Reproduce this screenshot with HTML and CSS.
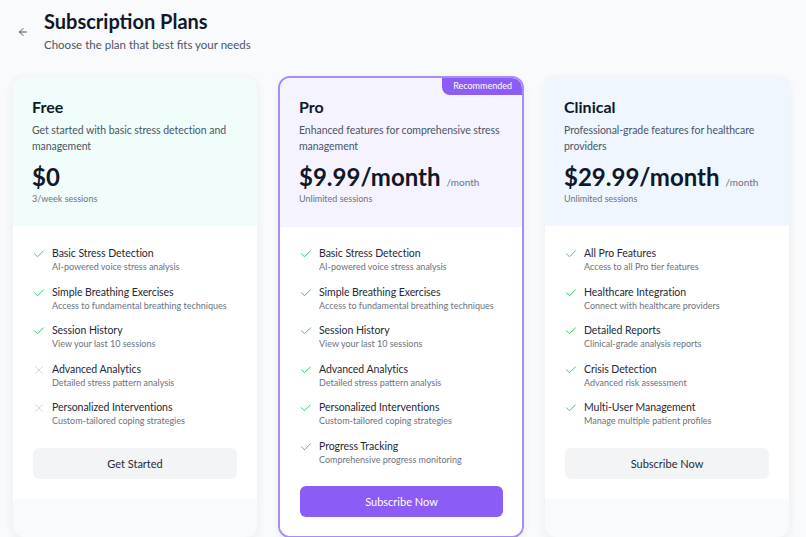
FILE: index.html
```html
<!DOCTYPE html>
<html lang="en">
<head>
    <meta charset="UTF-8">
    <meta name="viewport" content="width=device-width, initial-scale=1.0">
    <title>Subscription Plans</title>
    <link rel="stylesheet" href="styles.css">
</head>
<body>
    <div class="top">
        <button class="back-btn">
            <svg width="12" height="12" viewBox="0 0 24 24" fill="none" stroke="#4b5563" stroke-width="2" stroke-linecap="round" stroke-linejoin="round"><path d="M19 12H5"/><path d="M12 19l-7-7 7-7"/></svg>
        </button>
        <div>
            <h1>Subscription Plans</h1>
            <p class="sub">Choose the plan that best fits your needs</p>
        </div>
    </div>

    <div class="plans">
        <!-- Free -->
        <div class="card">
            <div class="card-head free">
                <h2>Free</h2>
                <p class="desc">Get started with basic stress detection and management</p>
                <div class="price"><span class="amount">$0</span></div>
                <p class="sessions">3/week sessions</p>
            </div>
            <div class="card-body">
                <ul class="features">
                    <li><span class="ic yes"></span><div><p class="f-title">Basic Stress Detection</p><p class="f-sub">AI-powered voice stress analysis</p></div></li>
                    <li><span class="ic yes"></span><div><p class="f-title">Simple Breathing Exercises</p><p class="f-sub">Access to fundamental breathing techniques</p></div></li>
                    <li><span class="ic yes"></span><div><p class="f-title">Session History</p><p class="f-sub">View your last 10 sessions</p></div></li>
                    <li><span class="ic no"></span><div><p class="f-title">Advanced Analytics</p><p class="f-sub">Detailed stress pattern analysis</p></div></li>
                    <li><span class="ic no"></span><div><p class="f-title">Personalized Interventions</p><p class="f-sub">Custom-tailored coping strategies</p></div></li>
                </ul>
                <button class="plan-btn">Get Started</button>
            </div>
        </div>

        <!-- Pro -->
        <div class="card pro">
            <span class="badge">Recommended</span>
            <div class="card-head pro-head">
                <h2>Pro</h2>
                <p class="desc">Enhanced features for comprehensive stress management</p>
                <div class="price"><span class="amount">$9.99/month</span><span class="per">/month</span></div>
                <p class="sessions">Unlimited sessions</p>
            </div>
            <div class="card-body">
                <ul class="features">
                    <li><span class="ic yes"></span><div><p class="f-title">Basic Stress Detection</p><p class="f-sub">AI-powered voice stress analysis</p></div></li>
                    <li><span class="ic yes"></span><div><p class="f-title">Simple Breathing Exercises</p><p class="f-sub">Access to fundamental breathing techniques</p></div></li>
                    <li><span class="ic yes"></span><div><p class="f-title">Session History</p><p class="f-sub">View your last 10 sessions</p></div></li>
                    <li><span class="ic yes"></span><div><p class="f-title">Advanced Analytics</p><p class="f-sub">Detailed stress pattern analysis</p></div></li>
                    <li><span class="ic yes"></span><div><p class="f-title">Personalized Interventions</p><p class="f-sub">Custom-tailored coping strategies</p></div></li>
                    <li><span class="ic yes"></span><div><p class="f-title">Progress Tracking</p><p class="f-sub">Comprehensive progress monitoring</p></div></li>
                </ul>
                <button class="plan-btn primary">Subscribe Now</button>
            </div>
        </div>

        <!-- Clinical -->
        <div class="card">
            <div class="card-head clinical">
                <h2>Clinical</h2>
                <p class="desc">Professional-grade features for healthcare providers</p>
                <div class="price"><span class="amount">$29.99/month</span><span class="per">/month</span></div>
                <p class="sessions">Unlimited sessions</p>
            </div>
            <div class="card-body">
                <ul class="features">
                    <li><span class="ic yes"></span><div><p class="f-title">All Pro Features</p><p class="f-sub">Access to all Pro tier features</p></div></li>
                    <li><span class="ic yes"></span><div><p class="f-title">Healthcare Integration</p><p class="f-sub">Connect with healthcare providers</p></div></li>
                    <li><span class="ic yes"></span><div><p class="f-title">Detailed Reports</p><p class="f-sub">Clinical-grade analysis reports</p></div></li>
                    <li><span class="ic yes"></span><div><p class="f-title">Crisis Detection</p><p class="f-sub">Advanced risk assessment</p></div></li>
                    <li><span class="ic yes"></span><div><p class="f-title">Multi-User Management</p><p class="f-sub">Manage multiple patient profiles</p></div></li>
                </ul>
                <button class="plan-btn">Subscribe Now</button>
            </div>
        </div>
    </div>

    <script>
        // check and cross marks
        const check = '<svg width="12" height="12" viewBox="0 0 24 24" fill="none" stroke="#22c55e" stroke-width="1.8" stroke-linecap="round" stroke-linejoin="round"><path d="M21 5.5L9 17.5l-6-6"/></svg>';
        const cross = '<svg width="12" height="12" viewBox="0 0 24 24" fill="none" stroke="#d1d5db" stroke-width="1.8" stroke-linecap="round" stroke-linejoin="round"><path d="M19 5L5 19"/><path d="M5 5l14 14"/></svg>';
        document.querySelectorAll('.ic.yes').forEach((el) => { el.innerHTML = check; });
        document.querySelectorAll('.ic.no').forEach((el) => { el.innerHTML = cross; });
    </script>
</body>
</html>
```

FILE: styles.css
```css
* {
    margin: 0;
    padding: 0;
    box-sizing: border-box;
}
body {
    font-family: Lato, "Noto Sans", sans-serif;
    background-color: #f8fafc;
    color: #111827;
    overflow: hidden;
}
.top {
    display: flex;
    align-items: flex-start;
    gap: 15px;
    padding: 8px 16px 0 17px;
    height: 76px;
}
.back-btn {
    border: none;
    background: none;
    margin-top: 18px;
    width: 12px;
    height: 12px;
    display: flex;
}
h1 {
    font-size: 20px;
    font-weight: 700;
    line-height: 27px;
    color: #111827;
}
.sub {
    font-size: 11.5px;
    color: #4b5563;
    margin-top: 3px;
}
.plans {
    display: grid;
    grid-template-columns: 1fr 1fr 1fr;
    gap: 20px;
    padding: 0 16px 0 12px;
}
.card {
    position: relative;
    background-color: #f9fafb;
    border-radius: 12px;
    overflow: hidden;
    box-shadow: 0 2px 8px rgba(0, 0, 0, 0.06);
    border: 1px solid #f3f4f6;
    height: 462px;
}
.card.pro {
    border: 2px solid #a78bfa;
}
.badge {
    position: absolute;
    top: 0;
    right: 0;
    background-color: #8b5cf6;
    color: white;
    font-size: 9px;
    padding: 2px 10px 4px 11px;
    border-bottom-left-radius: 8px;
}
.card-head {
    padding: 19px 19px 20px 19px;
    height: 149px;
}
.pro .card-head {
    padding: 18px 18px 20px 19px;
}
.free {
    background-color: #f0fdfa;
}
.pro-head {
    background-color: #f5f3ff;
}
.clinical {
    background-color: #eff6ff;
}
h2 {
    font-size: 16px;
    font-weight: 700;
    line-height: 22px;
}
.desc {
    font-size: 10.5px;
    letter-spacing: -0.05px;
    line-height: 16px;
    color: #4b5563;
    margin-top: 4px;
}
.price {
    display: flex;
    align-items: baseline;
    gap: 6px;
    margin-top: 8px;
    height: 29px;
}
.amount {
    font-size: 24px;
    font-weight: 700;
    line-height: 29px;
    color: #111827;
}
.per {
    font-size: 10px;
    color: #6b7280;
}
.sessions {
    font-size: 9px;
    color: #6b7280;
    line-height: 12px;
    margin-top: 2px;
}
.card-body {
    background-color: white;
    padding: 20px 20px 20px 20px;
}
.pro .card-body {
    padding: 19px 19px 20px 20px;
}
.features {
    list-style: none;
    display: flex;
    flex-direction: column;
    gap: 10.5px;
}
.features li {
    display: flex;
    gap: 7px;
}
.ic {
    display: flex;
    width: 12px;
    height: 12px;
    margin-top: 2px;
}
.f-title {
    font-size: 10.5px;
    letter-spacing: -0.05px;
    line-height: 14px;
    color: #1f2937;
}
.f-sub {
    font-size: 9px;
    line-height: 14px;
    color: #6b7280;
}
.plan-btn {
    display: block;
    width: 100%;
    height: 31px;
    margin-top: 20px;
    border: none;
    border-radius: 6px;
    background-color: #f3f4f6;
    color: #1f2937;
    font-family: inherit;
    font-size: 11px;
}
.pro .plan-btn {
    margin-top: 19px;
}
.plan-btn.primary {
    background-color: #8b5cf6;
    color: white;
}
```
